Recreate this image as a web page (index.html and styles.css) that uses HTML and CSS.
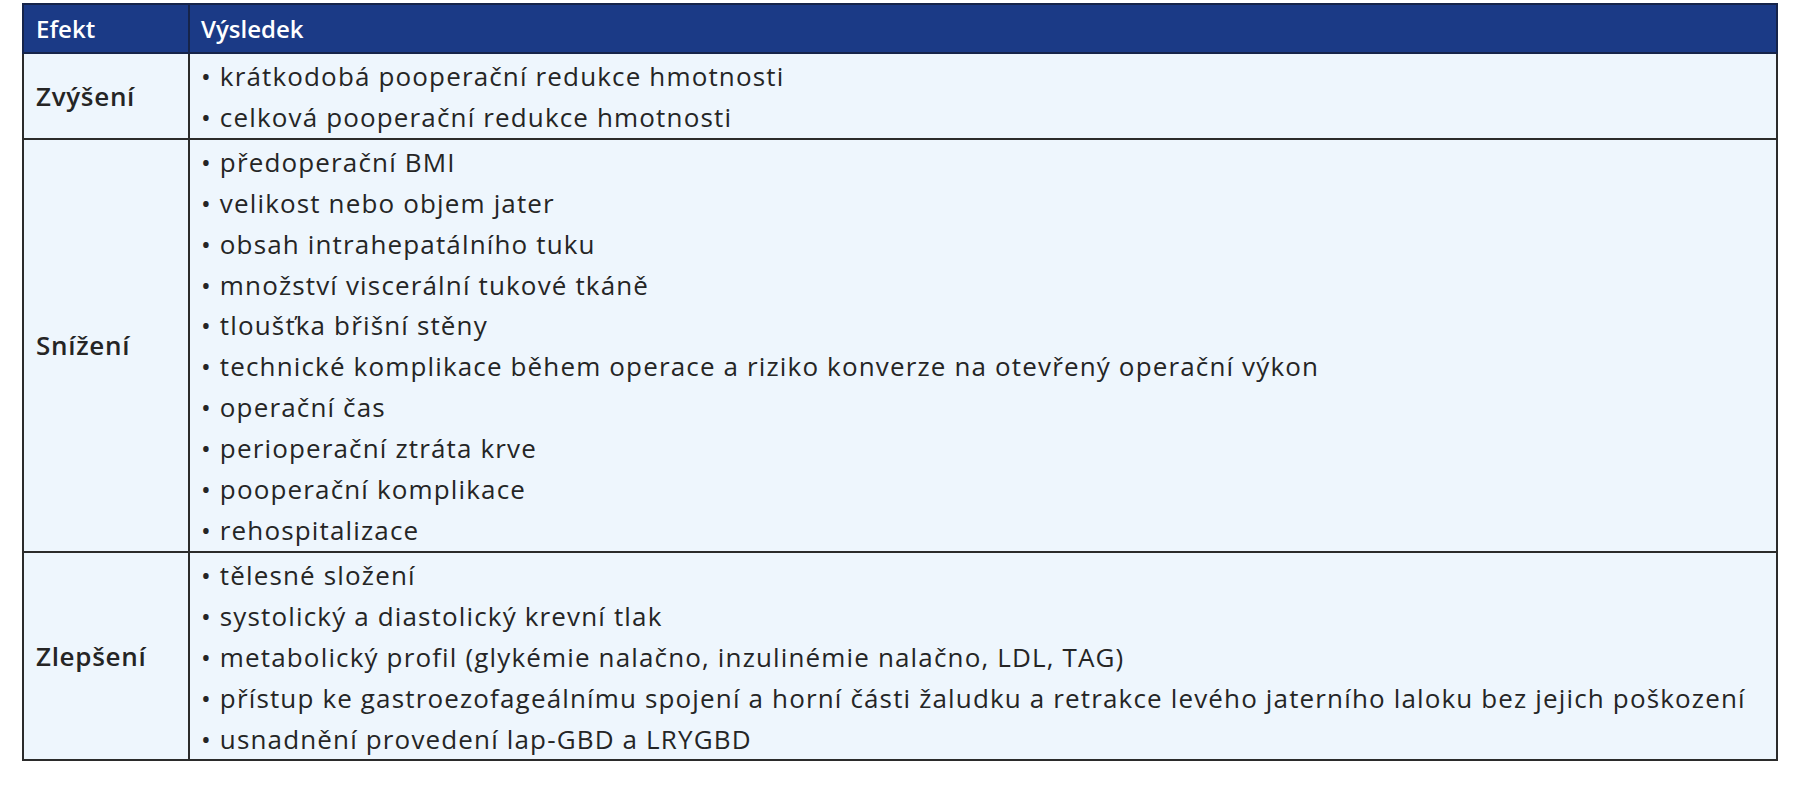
FILE: index.html
```html
<!DOCTYPE html>
<html lang="cs">
<head>
<meta charset="utf-8">
<link rel="stylesheet" href="styles.css">
</head>
<body>
<table class="tbl">
  <thead>
    <tr>
      <th class="c1">Efekt</th>
      <th class="c2">Výsledek</th>
    </tr>
  </thead>
  <tbody>
    <tr>
      <td class="lbl">Zvýšení</td>
      <td class="items">
        <div>• krátkodobá pooperační redukce hmotnosti</div>
        <div>• celková pooperační redukce hmotnosti</div>
      </td>
    </tr>
    <tr>
      <td class="lbl">Snížení</td>
      <td class="items">
        <div>• předoperační BMI</div>
        <div>• velikost nebo objem jater</div>
        <div>• obsah intrahepatálního tuku</div>
        <div>• množství viscerální tukové tkáně</div>
        <div>• tloušťka břišní stěny</div>
        <div>• technické komplikace během operace a riziko konverze na otevřený operační výkon</div>
        <div>• operační čas</div>
        <div>• perioperační ztráta krve</div>
        <div>• pooperační komplikace</div>
        <div>• rehospitalizace</div>
      </td>
    </tr>
    <tr>
      <td class="lbl">Zlepšení</td>
      <td class="items">
        <div>• tělesné složení</div>
        <div>• systolický a diastolický krevní tlak</div>
        <div>• metabolický profil (glykémie nalačno, inzulinémie nalačno, LDL, TAG)</div>
        <div>• přístup ke gastroezofageálnímu spojení a horní části žaludku a retrakce levého jaterního laloku bez jejich poškození</div>
        <div>• usnadnění provedení lap-GBD a LRYGBD</div>
      </td>
    </tr>
  </tbody>
</table>
</body>
</html>
```

FILE: styles.css
```css
html, body {
  margin: 0;
  padding: 0;
  background: #ffffff;
}
body {
  padding: 3px 0 0 22px;
  font-family: "Open Sans", "Liberation Sans", sans-serif;
  color: #252525;
}
.tbl {
  border-collapse: collapse;
  width: 1756px;
}
.tbl th {
  background: #1b3a86;
  color: #ffffff;
  font-weight: 600;
  font-size: 24px;
  text-align: left;
  height: 47px;
  padding: 0 0 0 12px;
  border: 2px solid #16244a;
  line-height: 1;
}
.tbl th.c2 {
  padding-left: 11px;
}
.c1 {
  width: 152px;
}
.tbl td {
  background: #eef6fd;
  border: 2px solid #2b2b2b;
  vertical-align: middle;
}
.lbl {
  font-weight: 600;
  font-size: 26px;
  letter-spacing: 0.7px;
  padding: 0 0 0 12px;
}
.items {
  padding: 2px 0 0 11px;
  font-size: 26px;
  letter-spacing: 1.15px;
  line-height: 40.9px;
}
```
